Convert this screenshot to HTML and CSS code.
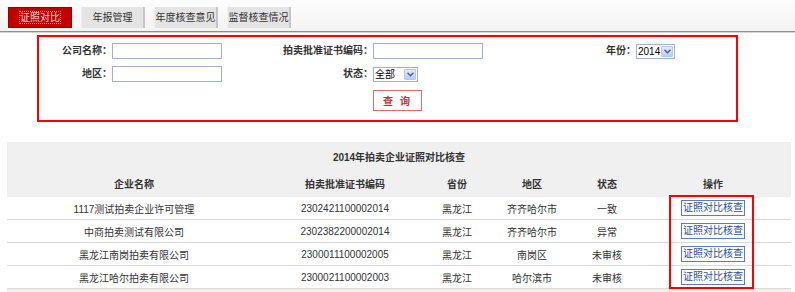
FILE: index.html
```html
<!DOCTYPE html>
<html lang="zh-CN">
<head>
    <meta charset="UTF-8">
    <title>证照对比</title>
    <link rel="stylesheet" href="styles.css">
</head>
<body>
<div class="tabs">
    <a class="tab active" href="#"><span>证照对比</span></a>
    <a class="tab" href="#">年报管理</a>
    <a class="tab" href="#">年度核查意见</a>
    <a class="tab" href="#">监督核查情况</a>
</div>

<form class="search">
    <div class="search-grid">
        <label>公司名称：</label>
        <input type="text" class="field">
        <label>拍卖批准证书编码：</label>
        <input type="text" class="field">
        <label>年份：</label>
        <span class="select year"><span class="select-text">2014</span><i class="arrow"><svg width="7" height="5" viewBox="0 0 7 5"><path d="M0.5 0.8 L3.5 3.8 L6.5 0.8" fill="none" stroke="#4a5f86" stroke-width="1.4"/></svg></i></span>

        <label>地区：</label>
        <input type="text" class="field">
        <label>状态：</label>
        <span class="select state"><span class="select-text">全部</span><i class="arrow"><svg width="7" height="5" viewBox="0 0 7 5"><path d="M0.5 0.8 L3.5 3.8 L6.5 0.8" fill="none" stroke="#4a5f86" stroke-width="1.4"/></svg></i></span>
        <span></span>
        <span></span>

        <button type="button" class="query">查 询</button>
    </div>
</form>

<div class="result">
    <table class="list">
        <colgroup>
            <col class="c1">
            <col class="c2">
            <col class="c3">
            <col class="c4">
            <col class="c5">
            <col class="c6">
        </colgroup>
        <thead>
            <tr class="title-row"><th colspan="6">2014年拍卖企业证照对比核查</th></tr>
            <tr class="head-row">
                <th>企业名称</th>
                <th>拍卖批准证书编码</th>
                <th>省份</th>
                <th>地区</th>
                <th>状态</th>
                <th>操作</th>
            </tr>
        </thead>
        <tbody>
            <tr>
                <td>1117测试拍卖企业许可管理</td>
                <td>2302421100002014</td>
                <td>黑龙江</td>
                <td>齐齐哈尔市</td>
                <td>一致</td>
                <td><a class="op" href="#">证照对比核查</a></td>
            </tr>
            <tr>
                <td>中商拍卖测试有限公司</td>
                <td>2302382200002014</td>
                <td>黑龙江</td>
                <td>齐齐哈尔市</td>
                <td>异常</td>
                <td><a class="op" href="#">证照对比核查</a></td>
            </tr>
            <tr>
                <td>黑龙江南岗拍卖有限公司</td>
                <td>2300011100002005</td>
                <td>黑龙江</td>
                <td>南岗区</td>
                <td>未审核</td>
                <td><a class="op" href="#">证照对比核查</a></td>
            </tr>
            <tr>
                <td>黑龙江哈尔拍卖有限公司</td>
                <td>2300021100002003</td>
                <td>黑龙江</td>
                <td>哈尔滨市</td>
                <td>未审核</td>
                <td><a class="op" href="#">证照对比核查</a></td>
            </tr>
        </tbody>
    </table>
    <div class="mark"></div>
    <div class="pager"></div>
</div>
</body>
</html>
```

FILE: styles.css
```css
body {
    margin: 0;
    font-family: "Liberation Sans", "Noto Sans CJK SC", sans-serif;
    font-size: 10px;
    color: #333;
    background-color: #fff;
}
.tabs {
    display: flex;
    height: 24px;
    padding: 7px 0 0 8px;
    background: linear-gradient(#fdfdfd, #f3f3f3);
    border-bottom: 1px solid #8f8f8f;
    box-shadow: 0 1px 0 #d6d6d6;
}
.tab {
    width: 64px;
    height: 21px;
    margin-right: 9px;
    box-sizing: border-box;
    line-height: 21px;
    text-align: center;
    text-decoration: none;
    color: #333;
    background-color: #e4e4e4;
    border-left: 1px solid #f0f0f0;
    border-right: 2px solid #c6c6c6;
}
.tab.active {
    background-color: #c20000;
    border: 1px solid #9a0000;
    color: #f3d6d6;
    line-height: 19px;
}
.tab.active span {
    outline: 1px dotted #e8b0b0;
}
.search {
    margin: 3px 0 0 37px;
    width: 701px;
    box-sizing: border-box;
    border: 2px solid #f00;
    padding: 6px 0 9px 0;
}
.search-grid {
    display: grid;
    grid-template-columns: 73px 112px 149px 112px 151px auto;
    grid-template-rows: 16px 16px 22px;
    row-gap: 7px;
    align-items: center;
}
.search-grid label {
    font-weight: bold;
    text-align: right;
    line-height: 16px;
    white-space: nowrap;
}
.field {
    width: 110px;
    height: 16px;
    box-sizing: border-box;
    border: 1px solid #9fb4cb;
    padding: 0 2px;
    font-size: 10px;
}
.select {
    display: inline-flex;
    align-items: center;
    height: 15px;
    box-sizing: border-box;
    border: 1px solid #9fb4cb;
    background-color: #fff;
}
.select.year {
    width: 39px;
}
.select.state {
    width: 45px;
}
.select-text {
    flex: 1;
    padding-left: 1px;
    font-size: 10px;
    color: #000;
    line-height: 13px;
}
.arrow {
    display: flex;
    align-items: center;
    justify-content: center;
    width: 12px;
    height: 11px;
    box-sizing: border-box;
    margin-right: 1px;
    background: linear-gradient(#e2ebfd, #b8ccf4);
    border: 1px solid #b4c6ee;
    border-radius: 1px;
}
.query {
    grid-row: 3;
    grid-column: 4;
    width: 49px;
    height: 21px;
    margin-top: 1px;
    align-self: start;
    border: 1px solid #e26a6a;
    background-color: #fff;
    color: #c23030;
    font-family: inherit;
    font-size: 10px;
    font-weight: bold;
    letter-spacing: 2px;
    padding: 0;
}
.result {
    position: relative;
    margin: 20px 4px 0 7px;
}
.list {
    width: 100%;
    border-collapse: collapse;
    table-layout: fixed;
}
.list thead {
    background-color: #f0f0f0;
}
.list th {
    font-weight: bold;
    color: #333;
    padding: 0;
}
.title-row th {
    height: 28px;
}
.head-row th {
    height: 27px;
}
.c1 { width: 254px; }
.c2 { width: 168px; }
.c3 { width: 56px; }
.c4 { width: 94px; }
.c5 { width: 56px; }
.list td {
    height: 22px;
    padding: 0;
    text-align: center;
    color: #333;
    background-color: #fff;
    border-bottom: 1px solid #d8d8d8;
}
.op {
    display: inline-block;
    height: 16px;
    line-height: 14px;
    box-sizing: border-box;
    padding: 0 1px;
    border: 1px solid #5b7bc2;
    color: #2c4d9a;
    text-decoration: none;
    vertical-align: middle;
}
.mark {
    position: absolute;
    left: 662px;
    top: 53px;
    width: 85px;
    height: 94px;
    box-sizing: border-box;
    border: 2px solid #f00;
}
.pager {
    height: 6px;
    background-color: #f3f1ea;
}
```
